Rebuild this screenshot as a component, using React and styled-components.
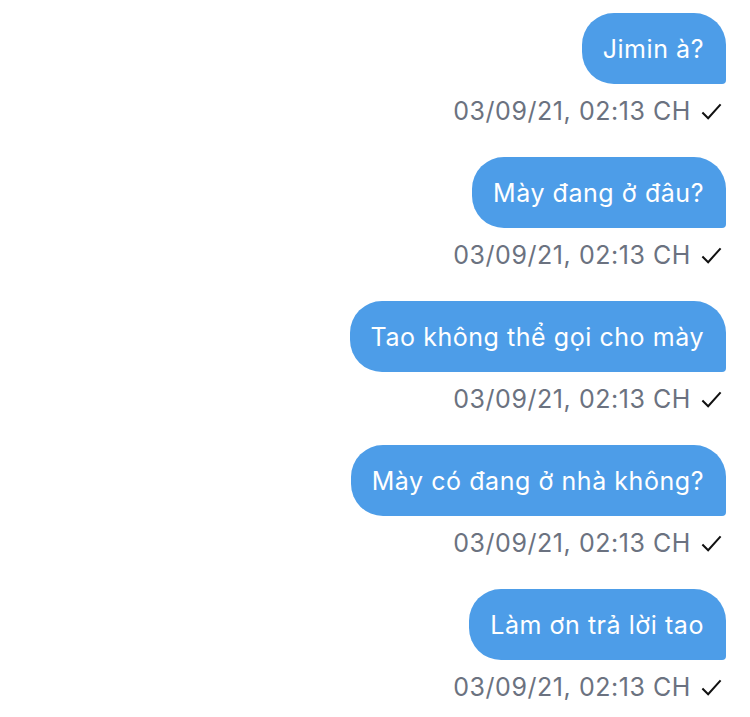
import React from 'react'
import styled, { createGlobalStyle } from 'styled-components'

const messages = [
  'Jimin à?',
  'Mày đang ở đâu?',
  'Tao không thể gọi cho mày',
  'Mày có đang ở nhà không?',
  'Làm ơn trả lời tao',
]

const App = () => {
  return (
    <>
      <GlobalStyle />
      <Thread>
        {messages.map((text, i) => (
          <Message key={i}>
            <Bubble>{text}</Bubble>
            <Meta>
              <Time>03/09/21, 02:13 CH</Time>
              <Check viewBox="0 0 24 24">
                <path d="M2.5 13l6 6L21.5 4.5" />
              </Check>
            </Meta>
          </Message>
        ))}
      </Thread>
    </>
  )
}

export default App

const GlobalStyle = createGlobalStyle`
  body {
    margin: 0;
    background: #ffffff;
    font-family: Inter, "Liberation Sans", Arial, sans-serif;
  }
`

const Thread = styled.div`
  display: flex;
  flex-direction: column;
  align-items: flex-end;
  padding: 13px 24px 0 0;
  gap: 30px;
`

const Message = styled.div`
  display: flex;
  flex-direction: column;
  align-items: flex-end;
  gap: 11px;
`

const Bubble = styled.div`
  background: #4d9de8;
  color: #ffffff;
  font-size: 25px;
  letter-spacing: 0.55px;
  line-height: 31px;
  padding: 21px 22px 19px 21px;
  border-radius: 32px 32px 4px 32px;
`

const Meta = styled.div`
  display: flex;
  align-items: center;
  gap: 9px;
  padding-right: 3px;
  height: 32px;
`

const Time = styled.span`
  color: #6b7280;
  font-size: 25px;
  letter-spacing: 0.55px;
`

const Check = styled.svg`
  width: 23px;
  height: 23px;
  fill: none;
  stroke: #111111;
  stroke-width: 2.1;
`
